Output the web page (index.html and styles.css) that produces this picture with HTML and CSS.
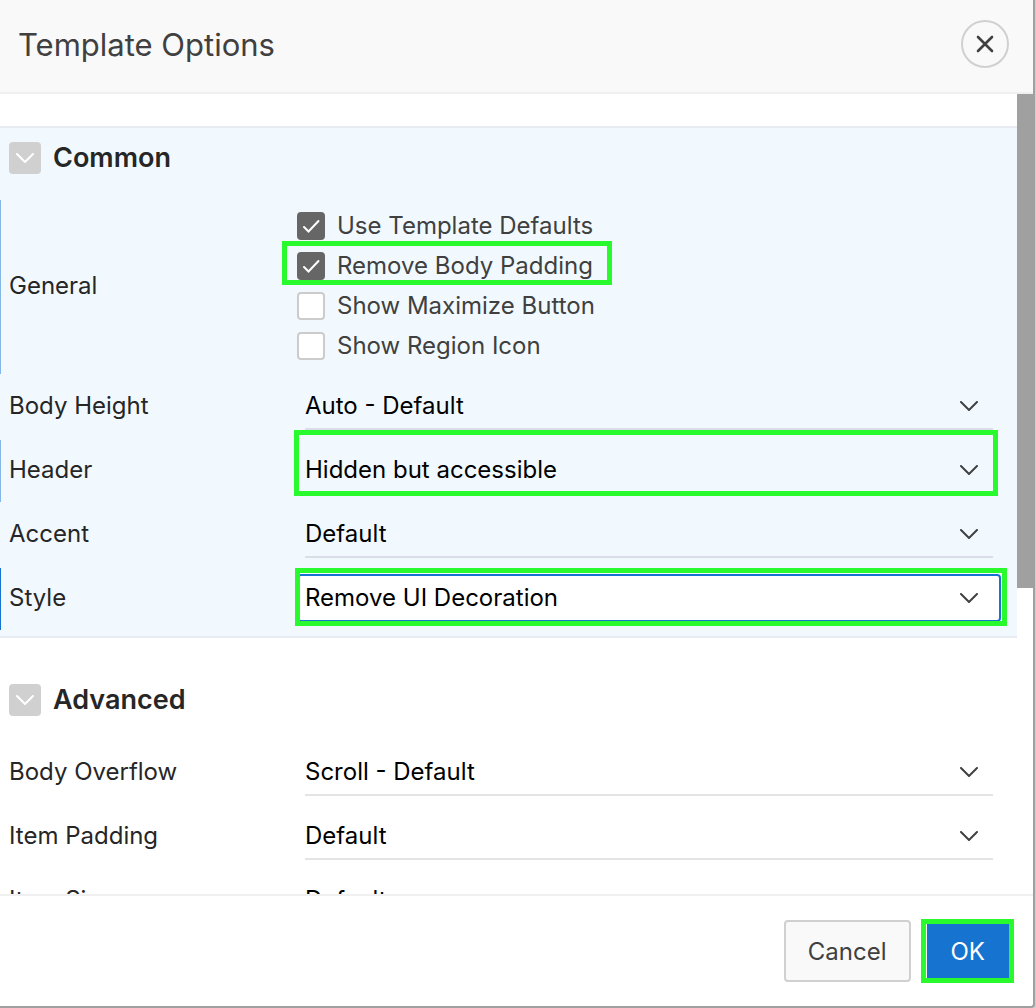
FILE: index.html
```html
<!DOCTYPE html>
<html lang="en">
<head>
<meta charset="utf-8">
<title>Template Options</title>
<link rel="stylesheet" href="styles.css">
</head>
<body>
<svg width="0" height="0" class="symbols" aria-hidden="true">
  <symbol id="chevron" viewBox="0 0 18 10"><path d="M1 1l8 8 8-8" fill="none" stroke="currentColor" stroke-width="2" stroke-linecap="round"/></symbol>
  <symbol id="check" viewBox="0 0 28 28"><path d="M7 15l4.500 4.500L21.500 9" fill="none" stroke="currentColor" stroke-width="2" stroke-linecap="round"/></symbol>
</svg>
<main class="dialog" role="dialog" aria-labelledby="dialog-title">
  <header class="dialog-header">
    <h1 id="dialog-title">Template Options</h1>
    <button class="close" type="button" aria-label="Close">
      <svg width="18" height="18" viewBox="0 0 18 18"><path d="M2 2l14 14M16 2L2 16" stroke="currentColor" stroke-width="2.600" stroke-linecap="round"/></svg>
    </button>
  </header>
  <div class="dialog-body">
    <form class="options" id="options">
      <section class="group group-active">
        <div class="group-header">
          <button class="toggle" type="button" aria-label="Collapse Common"><svg width="18" height="10"><use href="#chevron"/></svg></button>
          <h2>Common</h2>
        </div>
        <div class="rows">
          <div class="row changed" role="group" aria-labelledby="general">
            <span class="label" id="general">General</span>
            <div class="field checks">
              <label class="check"><span class="tick"><input type="checkbox" checked><svg width="28" height="28"><use href="#check"/></svg></span>Use Template Defaults</label>
              <label class="check"><span class="tick"><input type="checkbox" checked><svg width="28" height="28"><use href="#check"/></svg></span>Remove Body Padding<span class="mark mark-check"></span></label>
              <label class="check"><span class="tick"><input type="checkbox"></span>Show Maximize Button</label>
              <label class="check"><span class="tick"><input type="checkbox"></span>Show Region Icon</label>
            </div>
          </div>
          <div class="row">
            <label class="label" for="body-height">Body Height</label>
            <div class="field"><select id="body-height"><option>Auto - Default</option></select><svg class="arrow" width="18" height="10"><use href="#chevron"/></svg></div>
          </div>
          <div class="row changed">
            <label class="label" for="header">Header</label>
            <div class="field"><select id="header"><option>Hidden but accessible</option></select><svg class="arrow" width="18" height="10"><use href="#chevron"/></svg><span class="mark mark-header"></span></div>
          </div>
          <div class="row">
            <label class="label" for="accent">Accent</label>
            <div class="field"><select id="accent"><option>Default</option></select><svg class="arrow" width="18" height="10"><use href="#chevron"/></svg></div>
          </div>
          <div class="row changed current">
            <label class="label" for="style">Style</label>
            <div class="field"><select id="style"><option>Remove UI Decoration</option></select><svg class="arrow" width="18" height="10"><use href="#chevron"/></svg><span class="mark mark-style"></span></div>
          </div>
        </div>
      </section>
      <section class="group">
        <div class="group-header">
          <button class="toggle" type="button" aria-label="Collapse Advanced"><svg width="18" height="10"><use href="#chevron"/></svg></button>
          <h2>Advanced</h2>
        </div>
        <div class="rows">
          <div class="row">
            <label class="label" for="overflow">Body Overflow</label>
            <div class="field"><select id="overflow"><option>Scroll - Default</option></select><svg class="arrow" width="18" height="10"><use href="#chevron"/></svg></div>
          </div>
          <div class="row">
            <label class="label" for="padding">Item Padding</label>
            <div class="field"><select id="padding"><option>Default</option></select><svg class="arrow" width="18" height="10"><use href="#chevron"/></svg></div>
          </div>
          <div class="row">
            <label class="label" for="size">Item Size</label>
            <div class="field"><select id="size"><option>Default</option></select><svg class="arrow" width="18" height="10"><use href="#chevron"/></svg></div>
          </div>
        </div>
      </section>
    </form>
    <div class="scrollbar"><div class="thumb"></div></div>
  </div>
  <footer class="dialog-footer">
    <button class="button" type="button">Cancel</button>
    <button class="button button-primary" type="submit" form="options">OK<span class="mark mark-ok"></span></button>
  </footer>
</main>
</body>
</html>
```
FILE: styles.css
```css
* {
  box-sizing: border-box;
}

body {
  margin: 0;
  background: #cfcfcf;
  color: #262626;
  font: 24px/32px Inter, "Liberation Sans", sans-serif;
}

button,
input,
select {
  margin: 0;
  font: inherit;
}

h1,
h2 {
  margin: 0;
}

.symbols {
  position: absolute;
}

.dialog {
  display: flex;
  flex-direction: column;
  height: 100vh;
  margin-right: 1px;
  border: solid #a0a0a0;
  border-width: 0 2px 2px 0;
  border-bottom-right-radius: 4px;
  background: #fff;
}

.dialog-header {
  display: flex;
  align-items: center;
  justify-content: space-between;
  padding: 20px 24px 24px 18px;
  border-bottom: 2px solid #f0f0f0;
  background: #f9f9f9;
  color: #404040;
}

h1 {
  padding-top: 2px;
  font-size: 31px;
  font-weight: 400;
  line-height: 46px;
}

.close {
  display: grid;
  place-items: center;
  width: 48px;
  height: 48px;
  padding: 0;
  border: 2px solid #d0d0d0;
  border-radius: 50%;
  background: #f9f9f9;
  color: #404040;
}

.dialog-body {
  display: grid;
  grid-template-columns: 1fr 16px;
  flex: 1;
  min-height: 0;
  overflow: hidden;
}

.options {
  min-height: 0;
  padding-top: 32px;
  overflow: hidden;
}

.thumb {
  height: 61.75%;
  background: #a0a0a0;
}

.group {
  padding: 46px 16px 6px 0;
}

.group-active {
  padding-top: 14px;
  border: solid #e8ecf2;
  border-width: 2px 0;
  background: #f1f9ff;
}

.group-header {
  display: flex;
  align-items: center;
  gap: 12px;
  margin-bottom: 26px;
  padding-left: 9px;
}

h2 {
  font-size: 27px;
  font-weight: 600;
}

.toggle {
  display: grid;
  place-items: center;
  width: 32px;
  height: 32px;
  padding: 0;
  border: 0;
  border-radius: 4px;
  background: #d0d0d0;
  color: #fff;
}

.rows {
  display: grid;
  gap: 2px;
}

.row {
  display: grid;
  grid-template-columns: 288px 1fr;
  align-items: center;
  padding: 6px 0 8px 8px;
  border-left: 1px solid transparent;
}

.changed {
  border-left-color: #84b6e8;
}

.current {
  border-left-color: #1673cf;
}

.field {
  position: relative;
  display: grid;
  align-items: center;
}

.checks {
  justify-items: start;
}

.check {
  position: relative;
  display: flex;
  align-items: center;
  gap: 12px;
  height: 40px;
  color: #404040;
}

.tick {
  display: grid;
  color: #fff;
}

.tick > * {
  grid-area: 1 / 1;
}

.tick input {
  width: 28px;
  height: 28px;
  border: 2px solid #ccc;
  border-radius: 4px;
  background: #fff;
  appearance: none;
}

.tick input:checked {
  border-color: #666;
  background: #666;
}

select {
  grid-area: 1 / 1;
  height: 48px;
  margin: 0 8px;
  padding: 2px 0 0;
  border: 0 solid #e4e4e4;
  border-bottom-width: 2px;
  border-radius: 0;
  background: transparent;
  color: #000;
  appearance: none;
}

.group-active select {
  border-color: #dbdee8;
}

.current select {
  margin: 0;
  padding: 0 6px;
  border: 2px solid #1673cf;
  border-radius: 4px;
  background: #fff;
}

.group-active .current select {
  border-color: #1673cf;
}

.arrow {
  grid-area: 1 / 1;
  justify-self: end;
  margin-right: 23px;
  color: #404040;
  pointer-events: none;
}

.dialog-footer {
  display: flex;
  justify-content: flex-end;
  gap: 16px;
  padding: 24px;
  border-top: 2px solid #f0f0f0;
}

.button {
  height: 62px;
  padding: 2px 22px 0;
  border: 2px solid #d0d0d0;
  border-radius: 4px;
  background: #f9f9f9;
  color: #404040;
}

.button-primary {
  position: relative;
  border-color: #1673cf;
  background: #1673cf;
  color: #fff;
}

/* Green callout frames drawn over the controls */
.mark {
  position: absolute;
  z-index: 1;
  border: 5px solid #28fa2e;
  pointer-events: none;
}

.mark-check {
  inset: -5px -19px 1px -15px;
}

.mark-header {
  inset: -16px 3px -2px -3px;
}

.mark-style {
  inset: -6px -6px -4px -2px;
}

.mark-ok {
  inset: -3px -7px -3px -8px;
}
```
